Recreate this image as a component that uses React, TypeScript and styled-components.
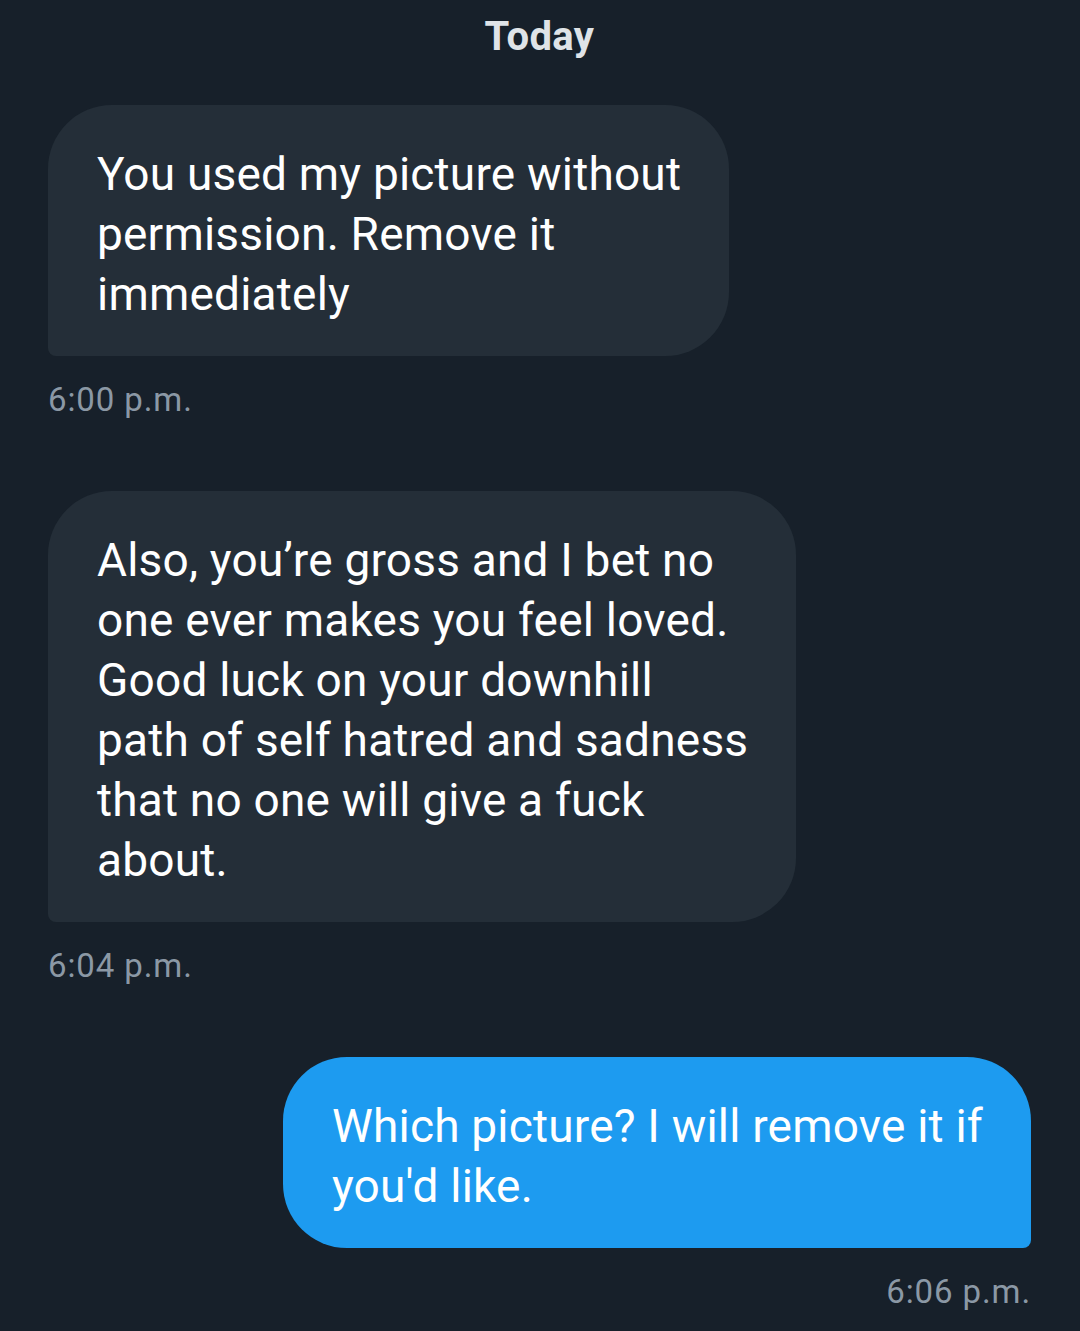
import React from 'react';
import styled, { createGlobalStyle } from 'styled-components';

const GlobalStyle = createGlobalStyle`
  html, body {
    margin: 0;
    padding: 0;
    background: #17202a;
  }
  body {
    font-family: Roboto, "Noto Sans", sans-serif;
    -webkit-font-smoothing: antialiased;
  }
`;

const Page = styled.div`
  width: 1080px;
  height: 1331px;
  box-sizing: border-box;
  padding: 14px 49px 0 48px;
  display: flex;
  flex-direction: column;
  background: #17202a;
  overflow: hidden;
`;

const DayLabel = styled.div`
  align-self: center;
  font-size: 40px;
  font-weight: 700;
  line-height: 46px;
  letter-spacing: 0.4px;
  color: #dfe3e7;
  margin-bottom: 45px;
`;

const Group = styled.div<{ $mine?: boolean }>`
  display: flex;
  flex-direction: column;
  align-items: ${(p) => (p.$mine ? 'flex-end' : 'flex-start')};
  margin-bottom: ${(p) => (p.$mine ? 0 : 73)}px;
`;

const Bubble = styled.div<{ $mine?: boolean }>`
  width: fit-content;
  box-sizing: border-box;
  padding: 39px 48px 32px 49px;
  border-radius: ${(p) => (p.$mine ? '64px 64px 8px 64px' : '64px 64px 64px 8px')};
  background: ${(p) => (p.$mine ? '#1d9bf0' : '#242e38')};
  color: #ffffff;
  font-size: 46px;
  line-height: 60px;
  letter-spacing: 0.2px;
`;

const Line = styled.div`
  white-space: nowrap;
`;

const Time = styled.div`
  margin-top: 26px;
  font-size: 33px;
  line-height: 36px;
  letter-spacing: 0.9px;
  color: #8b98a5;
`;

const messages = [
  {
    mine: false,
    lines: ['You used my picture without', 'permission. Remove it', 'immediately'],
    time: '6:00 p.m.',
  },
  {
    mine: false,
    lines: [
      'Also, you’re gross and I bet no',
      'one ever makes you feel loved.',
      'Good luck on your downhill',
      'path of self hatred and sadness',
      'that no one will give a fuck',
      'about.',
    ],
    time: '6:04 p.m.',
  },
  {
    mine: true,
    lines: ["Which picture? I will remove it if", "you'd like."],
    time: '6:06 p.m.',
  },
];

const App = () => {
  return (
    <>
      <GlobalStyle />
      <Page>
        <DayLabel>Today</DayLabel>
        {messages.map((m, i) => (
          <Group key={i} $mine={m.mine}>
            <Bubble $mine={m.mine}>
              {m.lines.map((l, j) => (
                <Line key={j}>{l}</Line>
              ))}
            </Bubble>
            <Time>{m.time}</Time>
          </Group>
        ))}
      </Page>
    </>
  );
};

export default App;
